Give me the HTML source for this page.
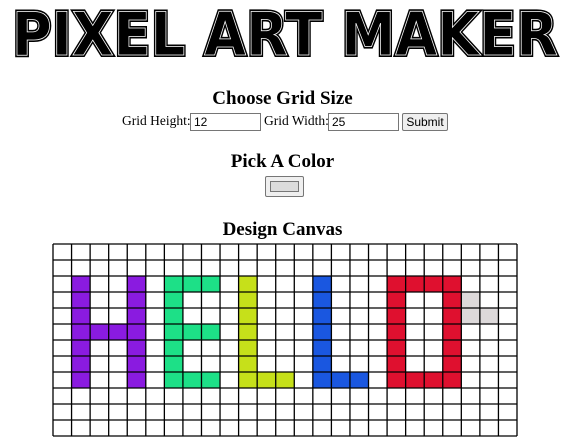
<!DOCTYPE html>
<html><head><style>
body{margin:0;width:565px;height:442px;background:#fff;font-family:"Liberation Serif",serif;position:relative;overflow:hidden}
.a{position:absolute}
h2{margin:0;font-size:19px;font-weight:bold;text-align:center;width:565px;left:0}
.lbl{font-size:13.5px}
.inp{border:1px solid #767676;font:12px "Liberation Sans",sans-serif;padding:0 3px;line-height:17px;box-sizing:border-box;height:18px}
.btn{border:1px solid #767676;background:#efefef;border-radius:2px;font:12px "Liberation Sans",sans-serif;text-align:center;line-height:16px;box-sizing:border-box}
</style></head><body>
<svg class="a" style="left:0;top:0" width="565" height="62">
<g font-family="DejaVu Sans" font-weight="bold" font-size="60">
<text x="12" y="55" textLength="546" lengthAdjust="spacingAndGlyphs" fill="#000" stroke="#000" stroke-width="4">PIXEL ART MAKER</text>
<text x="12" y="55" textLength="546" lengthAdjust="spacingAndGlyphs" fill="none" stroke="#fff" stroke-width="0.8">PIXEL ART MAKER</text>
</g></svg>
<h2 class="a" style="top:88px">Choose Grid Size</h2>
<div class="a lbl" style="left:122px;top:113px">Grid Height:</div>
<div class="a inp" style="left:190px;top:113px;width:71px">12</div>
<div class="a lbl" style="left:264px;top:113px">Grid Width:</div>
<div class="a inp" style="left:328px;top:113px;width:71px">25</div>
<div class="a btn" style="left:402px;top:113px;width:46px;height:18px">Submit</div>
<h2 class="a" style="top:151px">Pick A Color</h2>
<div class="a" style="left:265px;top:176px;width:39px;height:21px;border:1px solid #767676;background:#efefef;box-sizing:border-box;border-radius:2px"><div style="margin:4px 4px;height:9px;background:#dcdcdc;border:1px solid #777"></div></div>
<h2 class="a" style="top:219px">Design Canvas</h2>
<svg class="a" id="g" style="left:0;top:0" width="565" height="442"></svg>
<script>
var P='#8a1be0',G='#1de087',Y='#c6e01a',B='#1a57e0',R='#df102f',Q='#ddd9da';
var m={};function s(r,c,k){m[r+','+c]=k}
for(var r=2;r<=8;r++){s(r,1,P);s(r,4,P);s(r,6,G);s(r,10,Y);s(r,14,B);s(r,18,R);s(r,21,R)}
for(var c=1;c<=4;c++)s(5,c,P);
for(c=6;c<=8;c++){s(2,c,G);s(5,c,G);s(8,c,G)}
for(c=10;c<=12;c++)s(8,c,Y);for(c=14;c<=16;c++)s(8,c,B);
for(c=18;c<=21;c++){s(2,c,R);s(8,c,R)}
s(3,22,Q);s(4,22,Q);s(4,23,Q);
var X0=53,Y0=244,W=464/25,H=16,h='';
for(var k in m){var p=k.split(',');h+='<rect x="'+(X0+p[1]*W)+'" y="'+(Y0+p[0]*H)+'" width="'+W+'" height="'+H+'" fill="'+m[k]+'"/>'}
for(c=0;c<=25;c++){var x=X0+c*W;h+='<line x1="'+x+'" y1="'+Y0+'" x2="'+x+'" y2="'+(Y0+192)+'" stroke="#000" stroke-width="1.3"/>'}
for(r=0;r<=12;r++){var y=Y0+r*H;h+='<line x1="'+X0+'" y1="'+y+'" x2="'+(X0+464)+'" y2="'+y+'" stroke="#000" stroke-width="1.3"/>'}
document.getElementById('g').innerHTML=h;
</script>
</body></html>
